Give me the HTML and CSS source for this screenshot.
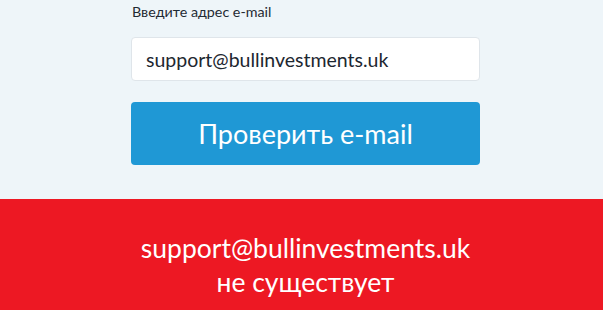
FILE: index.html
```html
<!DOCTYPE html>
<html lang="ru">
<head>
    <meta charset="UTF-8">
    <meta name="viewport" content="width=device-width, initial-scale=1.0">
    <title>Проверка e-mail</title>
    <link rel="stylesheet" href="styles.css">
</head>
<body>
    <div class="check">
        <form class="check-form" onsubmit="return false">
            <label class="check-label" for="email">Введите адрес e-mail</label>
            <input class="check-input" id="email" type="text" value="support@bullinvestments.uk">
            <button class="check-btn" type="submit">Проверить e-mail</button>
        </form>
    </div>

    <div class="result">
        <p>support@bullinvestments.uk<br>не существует</p>
    </div>
</body>
</html>
```

FILE: styles.css
```css
* {
    margin: 0;
    padding: 0;
    box-sizing: border-box;
}

body {
    font-family: Lato, "Open Sans", sans-serif;
    background: #eef5f9;
    color: #1d2730;
    padding-left: 8px;
}

.check {
    height: 199px;
}

.check-form {
    width: 349px;
    margin: 0 auto;
    display: flex;
    flex-direction: column;
}

.check-label {
    font-size: 14.3px;
    line-height: 16px;
    padding-top: 4px;
    margin-left: 1px;
    color: #1f2a33;
}

.check-input {
    margin-top: 17px;
    height: 44px;
    padding: 0 14px;
    border: 1px solid #dfe5ea;
    border-radius: 4px;
    background: #fff;
    font-family: inherit;
    font-size: 19.5px;
    color: #1d2730;
    outline: none;
}

.check-btn {
    margin-top: 21px;
    height: 63px;
    border: none;
    border-radius: 4px;
    background: #1f98d5;
    color: #fff;
    font-family: inherit;
    font-size: 27px;
    cursor: pointer;
}

.result {
    margin-left: -8px;
    height: 111px;
    background: #ed1823;
    color: #fff;
    text-align: center;
    padding: 32px 0 0 8px;
}

.result p {
    font-size: 26.5px;
    line-height: 34px;
}
```
